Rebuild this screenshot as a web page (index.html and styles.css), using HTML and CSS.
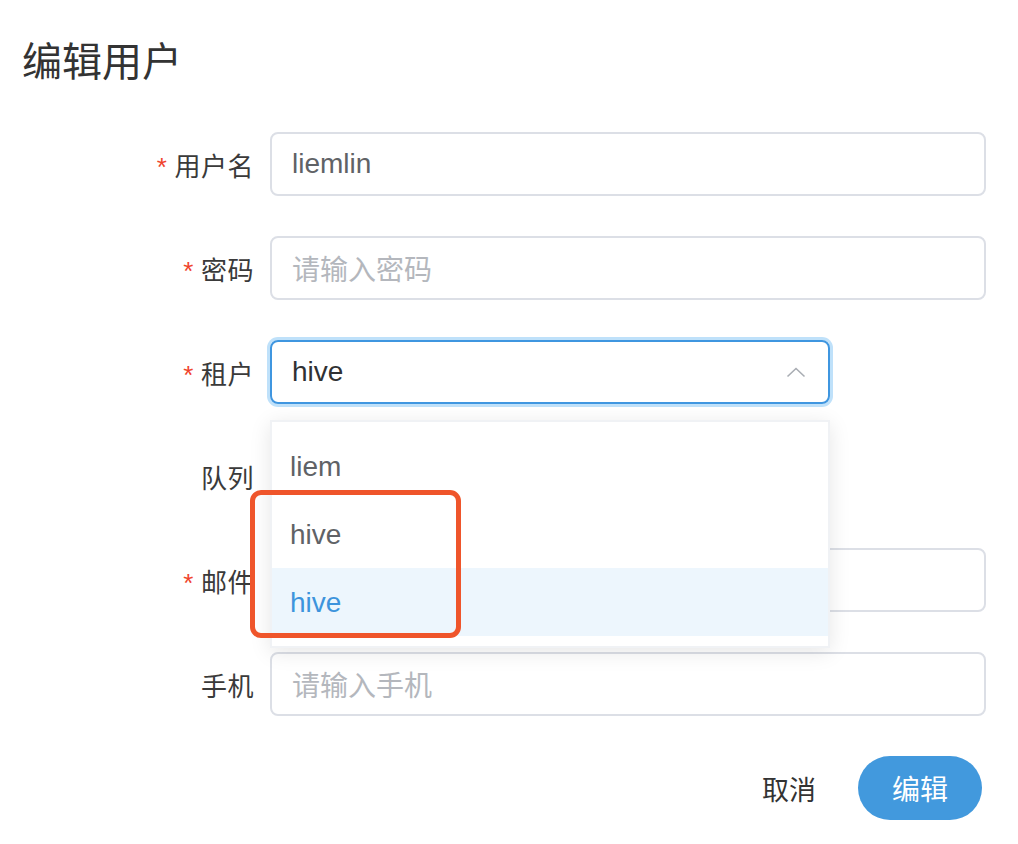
FILE: index.html
```html
<!DOCTYPE html>
<html lang="zh-CN">
<head>
<meta charset="utf-8">
<title>编辑用户</title>
<link rel="stylesheet" href="styles.css">
</head>
<body>
<div class="dialog">
  <div class="title">编辑用户</div>
  <form class="form">
    <div class="row">
      <label class="label"><span class="req">*</span>用户名</label>
      <div class="input"><span class="value">liemlin</span></div>
    </div>
    <div class="row">
      <label class="label"><span class="req">*</span>密码</label>
      <div class="input"><span class="ph">请输入密码</span></div>
    </div>
    <div class="row">
      <label class="label"><span class="req">*</span>租户</label>
      <div class="select-wrap">
        <div class="select focused">
          <span class="value dark">hive</span>
          <svg class="arrow" width="20" height="12" viewBox="0 0 20 12"><polyline points="1.5,10.5 10,2.5 18.5,10.5" fill="none" stroke="#a9adb3" stroke-width="1.6"/></svg>
        </div>
        <div class="dropdown">
          <div class="opt">liem</div>
          <div class="opt">hive</div>
          <div class="opt active">hive</div>
        </div>
        <div class="mark"></div>
      </div>
    </div>
    <div class="row">
      <label class="label">队列</label>
      <div class="select"></div>
    </div>
    <div class="row">
      <label class="label"><span class="req">*</span>邮件</label>
      <div class="input"></div>
    </div>
    <div class="row">
      <label class="label">手机</label>
      <div class="input"><span class="ph">请输入手机</span></div>
    </div>
  </form>
  <div class="footer">
    <button type="button" class="btn-text">取消</button>
    <button type="button" class="btn-primary">编辑</button>
  </div>
</div>
</body>
</html>
```
FILE: styles.css
```css
* { box-sizing: border-box; }
html, body { margin: 0; padding: 0; background: #fff; }
body {
  font-family: "Liberation Sans", "Noto Sans CJK SC", sans-serif;
  color: #303133;
}
.dialog { width: 1018px; height: 844px; position: relative; }
.title {
  margin: 34px 0 0 22px;
  height: 56px;
  line-height: 56px;
  font-size: 40px;
  color: #333;
}
.form { margin-top: 42px; }
.row {
  display: flex;
  align-items: center;
  height: 64px;
  margin-bottom: 40px;
}
.label {
  width: 254px;
  margin-right: 16px;
  text-align: right;
  font-size: 26px;
  color: #3a3a3a;
  letter-spacing: 0.5px;
}
.req { color: #f0442c; margin-right: 7px; font-size: 26px; }
.input {
  width: 716px;
  height: 64px;
  border: 2px solid #dcdfe6;
  border-radius: 8px;
  padding: 0 20px;
  display: flex;
  align-items: center;
  font-size: 28px;
}
.value { color: #606266; }
.value.dark { color: #303133; }
.ph { color: #b4b7bd; }
.select-wrap { position: relative; }
.select {
  width: 560px;
  height: 64px;
  border: 2px solid #dcdfe6;
  border-radius: 8px;
  padding: 0 20px;
  display: flex;
  align-items: center;
  justify-content: space-between;
  font-size: 28px;
}
.select.focused {
  border-color: #3f96e0;
  box-shadow: 0 0 0 3px #bfe1fa;
}
.arrow { margin-right: 2px; }
.dropdown {
  position: absolute;
  top: 80px;
  left: 0;
  width: 560px;
  height: 228px;
  background: #fff;
  border: 2px solid #f0f2f5;
  box-shadow: 0 4px 20px rgba(0, 0, 0, 0.10);
  padding: 10px 0;
  z-index: 5;
}
.opt {
  height: 68px;
  line-height: 70px;
  padding: 0 18px;
  font-size: 28px;
  color: #606266;
}
.opt.active {
  background: #edf6fd;
  color: #3d94dc;
}
.mark {
  position: absolute;
  left: -20px;
  top: 150px;
  width: 211px;
  height: 148px;
  border: 5px solid #ef552b;
  border-radius: 11px;
  z-index: 6;
}
.footer {
  display: flex;
  justify-content: flex-end;
  align-items: center;
  padding-right: 36px;
}
.btn-text {
  border: none;
  background: none;
  font-family: inherit;
  font-size: 27px;
  color: #333;
  padding: 0 20px;
  margin-right: 22px;
  height: 64px;
}
.btn-primary {
  border: none;
  font-family: inherit;
  background: #4299dd;
  color: #fff;
  font-size: 28px;
  width: 124px;
  height: 64px;
  border-radius: 32px;
}
```
